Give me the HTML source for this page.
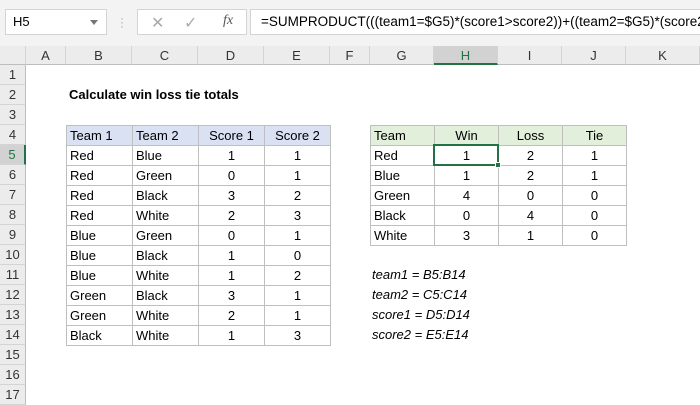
<!DOCTYPE html>
<html><head><style>
*{margin:0;padding:0;box-sizing:border-box}
body{width:700px;height:400px;overflow:hidden;background:#fff;font-family:"Liberation Sans",sans-serif;font-size:13px;color:#000;position:relative}
.a{position:absolute}
.top{left:0;top:0;width:700px;height:46px;background:#f3f3f3}
.box{background:#fff;border:1px solid #d4d4d4}
.ch{top:46px;height:19px;background:#ececec;border-right:1px solid #d4d4d4;border-bottom:1px solid #bdbdbd;text-align:center;line-height:19px;color:#333}
.rh{left:0;width:26px;height:20px;background:#ececec;border-bottom:1px solid #d4d4d4;border-right:1px solid #bdbdbd;text-align:center;line-height:20px;color:#333}
.c{height:20px;border:1px solid #bfbfbf;line-height:19px;padding:0 3px;white-space:nowrap}
.n{text-align:center}
.i{font-style:italic}
</style></head><body>
<div class="a top"></div>
<div class="a box" style="left:5px;top:9px;width:102px;height:26px;line-height:24px;padding-left:7px">H5<span style="position:absolute;right:8px;top:10px;border:4px solid transparent;border-top:5px solid #777"></span></div>
<div class="a" style="left:120px;top:16px;color:#aaa;font-size:12px;line-height:4px">·<br>·<br>·</div>
<div class="a box" style="left:137px;top:9px;width:110px;height:26px;color:#aaa">
<span class="a" style="left:13px;top:3px;font-size:16px">✕</span>
<span class="a" style="left:46px;top:3px;font-size:16px">✓</span>
<span class="a" style="left:85px;top:3px;font-family:'Liberation Serif',serif;font-style:italic;color:#555;font-size:14px">fx</span></div>
<div class="a box" style="left:250px;top:9px;width:460px;height:26px;line-height:24px;padding-left:10px;font-size:13.5px;white-space:nowrap;overflow:hidden">=SUMPRODUCT(((team1=$G5)*(score1&gt;score2))+((team2=$G5)*(score2&gt;score1)))</div>
<div class="a ch" style="left:0;width:26px"></div>
<div class="a ch" style="left:26px;width:40px">A</div>
<div class="a ch" style="left:66px;width:66px">B</div>
<div class="a ch" style="left:132px;width:66px">C</div>
<div class="a ch" style="left:198px;width:66px">D</div>
<div class="a ch" style="left:264px;width:66px">E</div>
<div class="a ch" style="left:330px;width:40px">F</div>
<div class="a ch" style="left:370px;width:64px">G</div>
<div class="a ch" style="left:434px;width:64px;background:#d2d2d2;border-bottom:2px solid #217346;color:#217346">H</div>
<div class="a ch" style="left:498px;width:64px">I</div>
<div class="a ch" style="left:562px;width:64px">J</div>
<div class="a ch" style="left:626px;width:74px">K</div>
<div class="a rh" style="top:65px">1</div><div class="a rh" style="top:85px">2</div><div class="a rh" style="top:105px">3</div><div class="a rh" style="top:125px">4</div>
<div class="a rh" style="top:145px;background:#d2d2d2;border-right:2px solid #217346;color:#217346">5</div>
<div class="a rh" style="top:165px">6</div><div class="a rh" style="top:185px">7</div><div class="a rh" style="top:205px">8</div><div class="a rh" style="top:225px">9</div><div class="a rh" style="top:245px">10</div><div class="a rh" style="top:265px">11</div><div class="a rh" style="top:285px">12</div><div class="a rh" style="top:305px">13</div><div class="a rh" style="top:325px">14</div><div class="a rh" style="top:345px">15</div><div class="a rh" style="top:365px">16</div><div class="a rh" style="top:385px">17</div>
<div class="a" style="left:69px;top:85px;line-height:20px;font-weight:bold">Calculate win loss tie totals</div>

<table class="a" style="left:66px;top:125px;border-collapse:collapse">
<tr style="background:#d9e1f2"><td class="c" style="width:66px">Team 1</td><td class="c" style="width:66px">Team 2</td><td class="c n" style="width:66px">Score 1</td><td class="c n" style="width:66px">Score 2</td></tr>
<tr><td class="c">Red</td><td class="c">Blue</td><td class="c n">1</td><td class="c n">1</td></tr>
<tr><td class="c">Red</td><td class="c">Green</td><td class="c n">0</td><td class="c n">1</td></tr>
<tr><td class="c">Red</td><td class="c">Black</td><td class="c n">3</td><td class="c n">2</td></tr>
<tr><td class="c">Red</td><td class="c">White</td><td class="c n">2</td><td class="c n">3</td></tr>
<tr><td class="c">Blue</td><td class="c">Green</td><td class="c n">0</td><td class="c n">1</td></tr>
<tr><td class="c">Blue</td><td class="c">Black</td><td class="c n">1</td><td class="c n">0</td></tr>
<tr><td class="c">Blue</td><td class="c">White</td><td class="c n">1</td><td class="c n">2</td></tr>
<tr><td class="c">Green</td><td class="c">Black</td><td class="c n">3</td><td class="c n">1</td></tr>
<tr><td class="c">Green</td><td class="c">White</td><td class="c n">2</td><td class="c n">1</td></tr>
<tr><td class="c">Black</td><td class="c">White</td><td class="c n">1</td><td class="c n">3</td></tr>
</table>

<table class="a" style="left:370px;top:125px;border-collapse:collapse">
<tr style="background:#e2efda"><td class="c" style="width:64px">Team</td><td class="c n" style="width:64px">Win</td><td class="c n" style="width:64px">Loss</td><td class="c n" style="width:64px">Tie</td></tr>
<tr><td class="c">Red</td><td class="c n">1</td><td class="c n">2</td><td class="c n">1</td></tr>
<tr><td class="c">Blue</td><td class="c n">1</td><td class="c n">2</td><td class="c n">1</td></tr>
<tr><td class="c">Green</td><td class="c n">4</td><td class="c n">0</td><td class="c n">0</td></tr>
<tr><td class="c">Black</td><td class="c n">0</td><td class="c n">4</td><td class="c n">0</td></tr>
<tr><td class="c">White</td><td class="c n">3</td><td class="c n">1</td><td class="c n">0</td></tr>
</table>
<div class="a" style="left:433px;top:144px;width:66px;height:22px;border:2px solid #217346"></div>
<div class="a" style="left:495px;top:162px;width:6px;height:6px;background:#217346;border:1px solid #fff"></div>

<div class="a i" style="left:372px;top:265px;line-height:20px">team1 = B5:B14<br>team2 = C5:C14<br>score1 = D5:D14<br>score2 = E5:E14</div>
</body></html>
